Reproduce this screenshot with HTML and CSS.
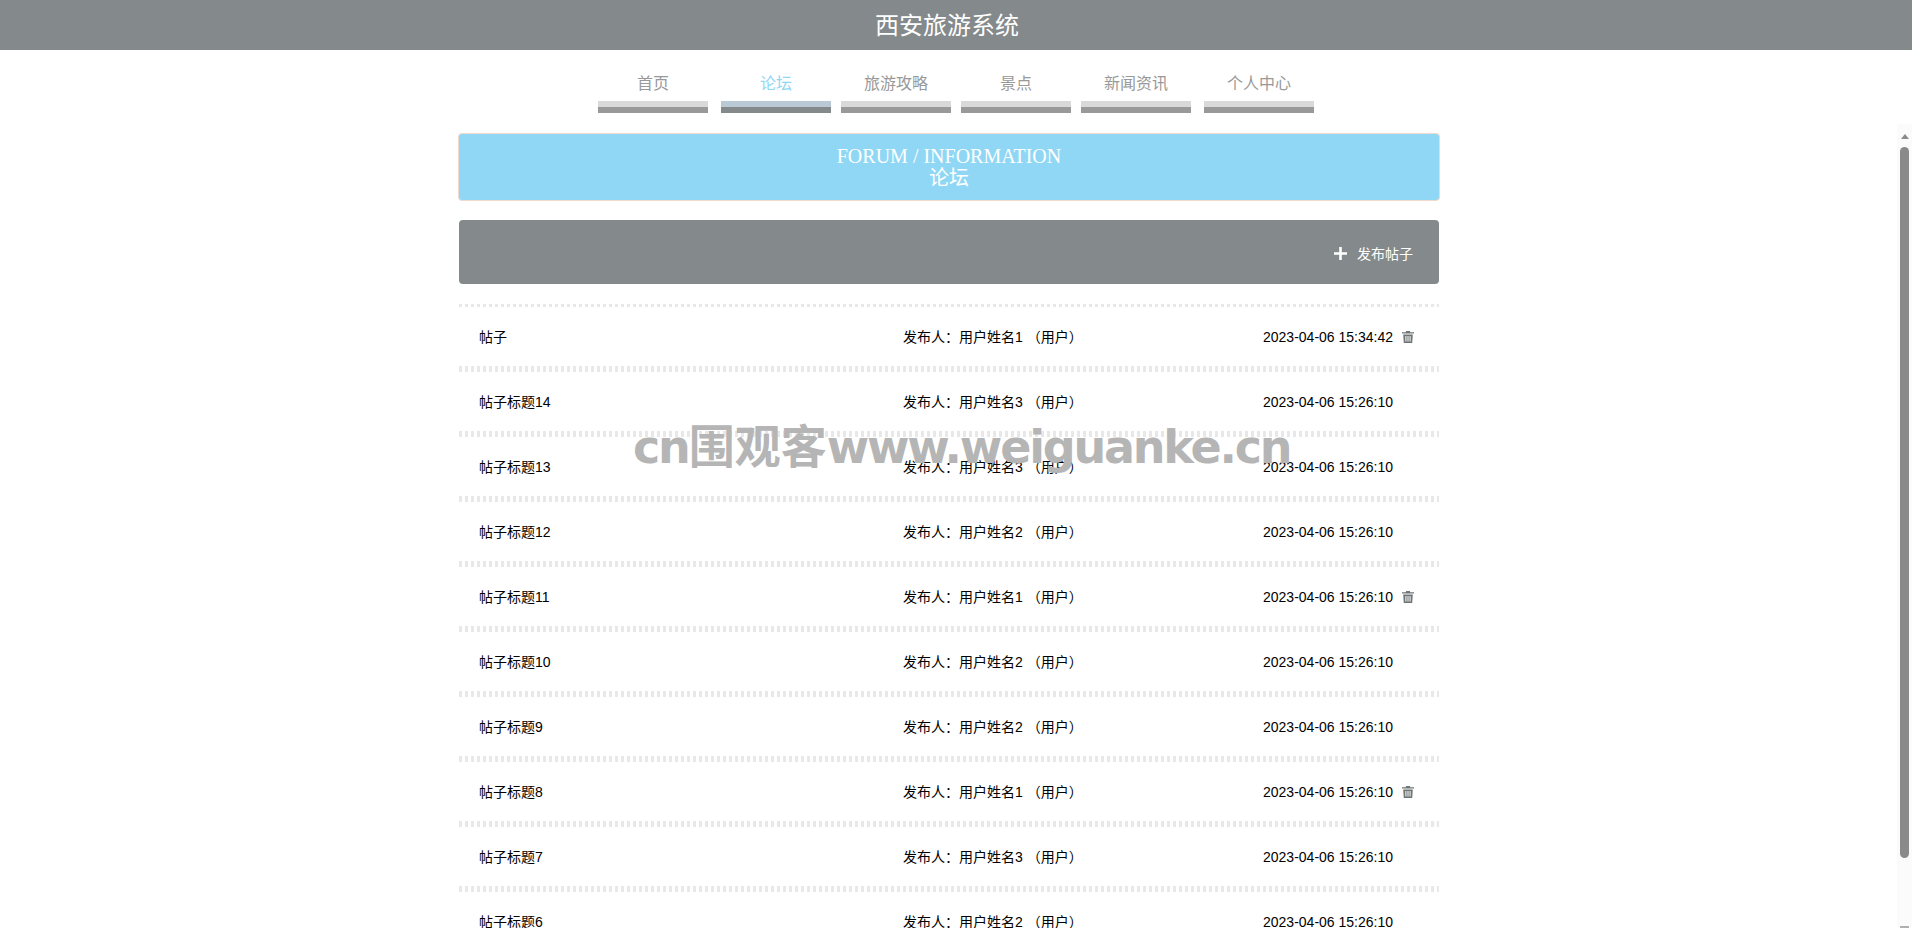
FILE: index.html
```html
<!DOCTYPE html>
<html lang="zh-CN">
<head>
  <meta charset="UTF-8">
  <title>西安旅游系统</title>
  <link rel="stylesheet" href="styles.css">
</head>
<body>
  <header class="top-bar">
    <h1>西安旅游系统</h1>
  </header>

  <nav class="main-nav">
    <a class="nav-item first">首页<span class="nav-bar"></span></a>
    <a class="nav-item active">论坛<span class="nav-bar"></span></a>
    <a class="nav-item">旅游攻略<span class="nav-bar"></span></a>
    <a class="nav-item">景点<span class="nav-bar"></span></a>
    <a class="nav-item">新闻资讯<span class="nav-bar"></span></a>
    <a class="nav-item last">个人中心<span class="nav-bar"></span></a>
  </nav>

  <div class="main-wrap">
    <main class="content">
      <div class="banner">
        <div>FORUM / INFORMATION</div>
        <div>论坛</div>
      </div>

      <div class="toolbar">
        <button type="button" class="add-btn">
          <svg class="plus-icon" viewBox="0 0 13 13"><path d="M5.2 0h2.6v5.2H13v2.6H7.8V13H5.2V7.8H0V5.2h5.2z"/></svg>
          发布帖子
        </button>
      </div>

      <ul class="post-list">
        <li class="post"><span class="post-text">帖子</span><span class="post-text">发布人：用户姓名1 （用户）</span><span class="post-time">2023-04-06 15:34:42<svg class="trash-icon" viewBox="0 0 12 12"><path d="M4.2 0h3.6l.5 1.2H12v1.4H0V1.2h3.7zM1.2 3.4h9.6l-.6 8.6H1.8zM3.4 5v5.6h1V5zm2.1 0v5.6h1V5zm2.1 0v5.6h1V5z"/></svg></span></li>
        <li class="post"><span class="post-text">帖子标题14</span><span class="post-text">发布人：用户姓名3 （用户）</span><span class="post-time">2023-04-06 15:26:10</span></li>
        <li class="post"><span class="post-text">帖子标题13</span><span class="post-text">发布人：用户姓名3 （用户）</span><span class="post-time">2023-04-06 15:26:10</span></li>
        <li class="post"><span class="post-text">帖子标题12</span><span class="post-text">发布人：用户姓名2 （用户）</span><span class="post-time">2023-04-06 15:26:10</span></li>
        <li class="post"><span class="post-text">帖子标题11</span><span class="post-text">发布人：用户姓名1 （用户）</span><span class="post-time">2023-04-06 15:26:10<svg class="trash-icon" viewBox="0 0 12 12"><path d="M4.2 0h3.6l.5 1.2H12v1.4H0V1.2h3.7zM1.2 3.4h9.6l-.6 8.6H1.8zM3.4 5v5.6h1V5zm2.1 0v5.6h1V5zm2.1 0v5.6h1V5z"/></svg></span></li>
        <li class="post"><span class="post-text">帖子标题10</span><span class="post-text">发布人：用户姓名2 （用户）</span><span class="post-time">2023-04-06 15:26:10</span></li>
        <li class="post"><span class="post-text">帖子标题9</span><span class="post-text">发布人：用户姓名2 （用户）</span><span class="post-time">2023-04-06 15:26:10</span></li>
        <li class="post"><span class="post-text">帖子标题8</span><span class="post-text">发布人：用户姓名1 （用户）</span><span class="post-time">2023-04-06 15:26:10<svg class="trash-icon" viewBox="0 0 12 12"><path d="M4.2 0h3.6l.5 1.2H12v1.4H0V1.2h3.7zM1.2 3.4h9.6l-.6 8.6H1.8zM3.4 5v5.6h1V5zm2.1 0v5.6h1V5zm2.1 0v5.6h1V5z"/></svg></span></li>
        <li class="post"><span class="post-text">帖子标题7</span><span class="post-text">发布人：用户姓名3 （用户）</span><span class="post-time">2023-04-06 15:26:10</span></li>
        <li class="post"><span class="post-text">帖子标题6</span><span class="post-text">发布人：用户姓名2 （用户）</span><span class="post-time">2023-04-06 15:26:10</span></li>
      </ul>
    </main>

    <div class="scroll-track">
      <span class="scroll-arrow"></span>
      <span class="scroll-thumb"></span>
      <span class="scroll-end"></span>
    </div>
  </div>

  <div class="watermark"><span class="tight">cn</span>围观客<span class="tight">www.weiguanke.cn</span></div>
</body>
</html>
```

FILE: styles.css
```css
* {
  box-sizing: border-box;
}

html, body {
  height: 100%;
}

body {
  margin: 0;
  display: flex;
  flex-direction: column;
  overflow: hidden;
  background: #ffffff;
  color: #000000;
  font-family: "Liberation Sans", "Noto Sans CJK SC", sans-serif;
  font-size: 14px;
}

.top-bar {
  flex: none;
  height: 50px;
  padding-right: 18px;
  background: #84898b;
  text-align: center;
}

.top-bar h1 {
  margin: 0;
  color: #ffffff;
  font-size: 24px;
  font-weight: normal;
  line-height: 52px;
}

.main-nav {
  flex: none;
  height: 74px;
  display: flex;
  justify-content: center;
  gap: 10px;
  padding-top: 17px;
}

.nav-item {
  width: 110px;
  height: 46px;
  display: flex;
  flex-direction: column;
  justify-content: space-between;
  align-items: center;
  color: #999999;
  font-size: 16px;
  line-height: 34px;
}

.nav-item.first {
  margin-right: 3px;
}

.nav-item.last {
  margin-left: 3px;
}

.nav-bar {
  width: 100%;
  height: 12px;
  flex: none;
  background: linear-gradient(#d9d9d9 50%, #999999 50%);
}

.nav-item.active {
  color: #8fd7f4;
}

.nav-item.active .nav-bar {
  background: linear-gradient(#b9c9d5 50%, #84898b 50%);
}

.main-wrap {
  flex: 1;
  min-height: 0;
  display: flex;
}

.content {
  flex: 1;
  min-width: 0;
  overflow: hidden;
  padding: 9px 0 0 458px;
}

.banner {
  width: 982px;
  height: 68px;
  display: flex;
  flex-direction: column;
  justify-content: center;
  border: 1px solid #f3d9cc;
  border-radius: 4px;
  background: #8fd7f4;
  color: #ffffff;
  font-family: "Liberation Serif", "Noto Sans CJK SC", serif;
  font-size: 20px;
  line-height: 22px;
  text-align: center;
}

.toolbar {
  width: 980px;
  height: 64px;
  margin: 19px 0 0 1px;
  display: flex;
  justify-content: flex-end;
  align-items: center;
  padding: 2px 26px 0 0;
  border-radius: 4px;
  background: #84898b;
}

.add-btn {
  display: flex;
  align-items: center;
  gap: 10px;
  padding: 0;
  border: none;
  background: none;
  color: #ffffff;
  font: inherit;
  cursor: pointer;
}

.plus-icon {
  width: 13px;
  height: 13px;
  fill: #ffffff;
}

.post-list {
  width: 980px;
  margin: 20px 0 0 1px;
  padding: 0;
  list-style: none;
}

/* square dots, top and bottom of every row */
.post {
  height: 65px;
  display: grid;
  grid-template-columns: 424px 360px auto;
  align-items: center;
  padding-left: 20px;
  background-image:
    repeating-linear-gradient(90deg, #e8e8e8 0 3px, transparent 3px 6px),
    repeating-linear-gradient(90deg, #e8e8e8 0 3px, transparent 3px 6px);
  background-size: 100% 3px;
  background-position: 0 0, 0 100%;
  background-repeat: no-repeat;
}

.post-text {
  padding-bottom: 2px;
}

.post-time {
  display: flex;
  align-items: center;
}

.trash-icon {
  width: 12px;
  height: 12px;
  margin-left: 9px;
  fill: #6f7476;
}

.scroll-track {
  flex: none;
  width: 15px;
  display: flex;
  flex-direction: column;
  align-items: center;
  background: #fbfbfb;
}

.scroll-arrow {
  margin-top: 10px;
  border-left: 4.5px solid transparent;
  border-right: 4.5px solid transparent;
  border-bottom: 5px solid #8a8a8a;
}

.scroll-thumb {
  width: 9px;
  height: 711px;
  margin-top: 8px;
  border-radius: 5px;
  background: #8a8a8a;
}

.scroll-end {
  width: 9px;
  height: 2px;
  margin-top: auto;
  background: #b0b0b0;
}

/* site stamp lying over the list */
.watermark {
  position: absolute;
  left: 633px;
  top: 413px;
  color: #b5b5b5;
  font-family: "DejaVu Sans", "Noto Sans CJK SC", sans-serif;
  font-size: 46px;
  font-weight: bold;
  line-height: 68px;
  white-space: nowrap;
}

.watermark .tight {
  letter-spacing: -2.2px;
}
```
